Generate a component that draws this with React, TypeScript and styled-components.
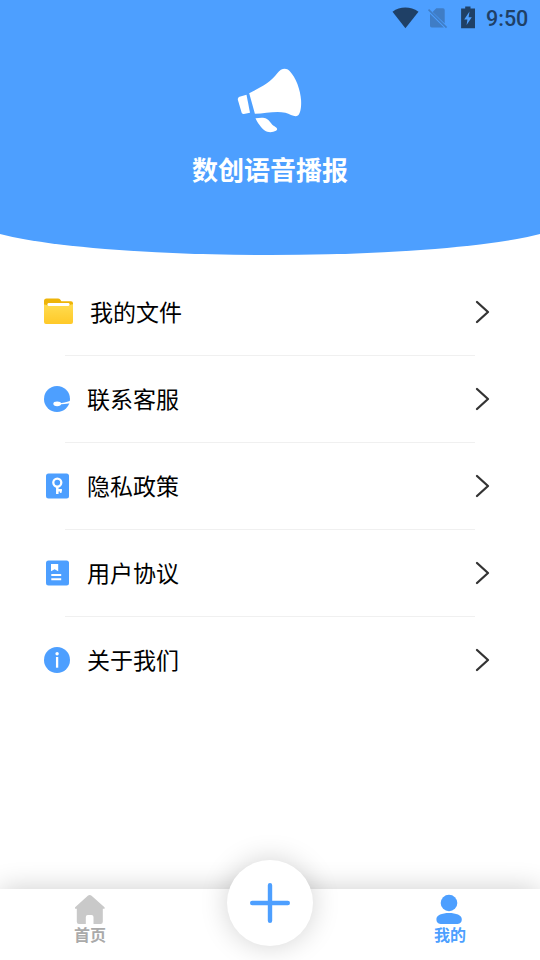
import React from 'react';
import styled, { createGlobalStyle } from 'styled-components';

const BLUE = '#4d9fff';
const STATUS = '#1f4066';

const GlobalStyle = createGlobalStyle`
  * { box-sizing: border-box; }
  body { margin: 0; background: #fff; font-family: "Noto Sans CJK SC", sans-serif; }
  svg { display: block; }
`;

const Screen = styled.div`
  width: 540px;
  height: 960px;
  display: flex;
  flex-direction: column;
  overflow: hidden;
  background: #fff;
`;

const Header = styled.header`
  width: 594px;
  height: 254.5px;
  margin-left: -27px;
  padding: 0 27px;
  flex: none;
  display: flex;
  flex-direction: column;
  align-items: center;
  background: ${BLUE};
  border-radius: 0 0 50% 50% / 0 0 36px 36px;
`;

const StatusBar = styled.div`
  width: 100%;
  height: 36px;
  padding-right: 12px;
  display: flex;
  justify-content: flex-end;
  align-items: center;
`;

const Clock = styled.span`
  width: 42px;
  margin-left: 8px;
  padding-top: 2px;
  font: 500 21.5px/34px Roboto, sans-serif;
  color: ${STATUS};
  white-space: nowrap;
`;

const Logo = styled.div`
  margin-top: 30px;
`;

const Title = styled.h1`
  margin: 15px 0 0;
  font-size: 26px;
  line-height: 40px;
  font-weight: 700;
  color: #fff;
`;

const Menu = styled.nav`
  flex: 1;
  padding-top: 14.5px;
`;

const Row = styled.div`
  height: 86px;
  padding: 0 49px 0 43px;
  display: flex;
  align-items: center;
`;

const RowLabel = styled.span`
  flex: 1;
  margin: 0 0 2px 16px;
  font-size: 23px;
  line-height: 34px;
  color: #000;
`;

const Divider = styled.div`
  height: 1px;
  margin: 0 65px;
  background: #f0f0f0;
`;

const TabBar = styled.footer`
  flex: none;
  height: 71px;
  display: grid;
  grid-template-columns: repeat(3, 1fr);
  background: #fff;
  box-shadow: 0 0 28px rgba(0, 0, 0, 0.2);
`;

const Tab = styled.div<{ $color: string }>`
  padding-top: 5px;
  display: flex;
  flex-direction: column;
  align-items: center;
  color: ${({ $color }) => $color};
`;

const TabLabel = styled.span`
  margin-top: -2px;
  font-size: 16px;
  line-height: 24px;
  font-weight: 700;
`;

const AddButton = styled.button`
  width: 86px;
  height: 86px;
  margin: -29px auto 0;
  padding: 0;
  border: 0;
  border-radius: 50%;
  background: #fff;
  display: flex;
  align-items: center;
  justify-content: center;
  box-shadow: 0 0 28px rgba(0, 0, 0, 0.18);
`;

const StatusIcons = () => (
  <svg width="86" height="34" viewBox="392 0 86 34" fill={STATUS}>
    <path d="M392.5 10.7C396.5 7.6 400.6 6.4 405.3 6.4s9 1.2 13.2 4.3L405.4 27.2z" />
    <g fill="#3f7dc6">
      <path d="M436.3 7.2H443a1.7 1.7 0 0 1 1.7 1.7v13.7L432.6 10.9z" />
      <path d="M430 12.7 443.9 26.4H431.7a1.7 1.7 0 0 1-1.7-1.7z" />
      <path d="m428 9.2 1.1-1.1 18 17.9-1.1 1.2z" />
    </g>
    <path d="M465.2 5.4h5.3v2h4.5v19.8h-13.9V7.4h4.1z" />
    <path d="m469.5 10.4-5.3 8h3.2l-.8 5.6 5.2-7.8h-3.2z" fill={BLUE} />
  </svg>
);

const Megaphone = () => (
  <svg width="66" height="68" viewBox="237 66 66 68" fill="#fff">
    <path d="M249.2 93.3C259 87.8 270 83.3 277.5 73c3.4-4.7 8.6-5.7 12.1-2.1 6.2 6.4 10.9 18.7 11.5 29.7.3 6.2-.6 12.2-2.9 14.7-3.2 2.4-7.3-.9-12.8-2.6-9.5-2.2-20 .8-30.5 1.1z" />
    <path d="m246.5 94.8 3.5 17.9-6.1 1.3c-1.1.1-1.9-.5-2.3-1.5l-3.7-12.6c-.3-1.4.3-2.8 1.6-3.2z" />
    <path d="M255.5 118.2c4.5-.5 8.5-.9 11 .5 3.3 1.8 4.2 5.2 8 7.6 2.7 1.7 3.6 3.3 1.5 4.5-3.7 2-8.4 1.8-11.3-.3-3.3-2.5-7.3-7.9-9.2-12.3z" />
  </svg>
);

const FolderIcon = () => (
  <svg width="31" height="30" viewBox="43 297 31 30">
    <defs>
      <linearGradient id="folder" x1="0" y1="0" x2="0" y2="1">
        <stop stopColor="#ffdc50" />
        <stop offset="1" stopColor="#ffc928" />
      </linearGradient>
    </defs>
    <path d="M44 301q0-2.5 2.5-2.5H58q1.5 0 2.2 1.1l1.2 1.7H71q2 0 2 2v10H44z" fill="#eeb408" />
    <rect x="47.5" y="303" width="22" height="6" rx="1.2" fill="#fff" />
    <path d="M44 304.5q2 0 3 .8.8.8 2 .8h19q1.3 0 2-1 .8-.8 3-.8V322q0 2-2 2H46q-2 0-2-2z" fill="url(#folder)" />
  </svg>
);

const ServiceIcon = () => (
  <svg width="28" height="28" viewBox="43 385 28 28">
    <circle cx="57" cy="399" r="13" fill={BLUE} />
    <ellipse cx="57.2" cy="403.8" rx="3.9" ry="2.4" fill="#fff" />
    <path d="M57 403.2c5 .4 8.6-1.2 13.5-2.5v2.5c-4 .3-8 1-12.2 1.2z" fill="#fff" />
  </svg>
);

const KeyIcon = () => (
  <svg width="28" height="28" viewBox="43 472 28 28" fill="none" stroke="#fff">
    <rect x="46" y="473.5" width="23" height="25" rx="2.5" fill={BLUE} stroke="none" />
    <circle cx="57.3" cy="482.6" r="4" strokeWidth="2.3" />
    <path d="M57.3 486.4v7.6M57.3 490.3h4.6" strokeWidth="2.5" />
    <path d="M60.7 490v2.9" strokeWidth="1.7" />
  </svg>
);

const DocumentIcon = () => (
  <svg width="28" height="28" viewBox="43 559 28 28">
    <rect x="46" y="560.5" width="23" height="25" rx="2.5" fill={BLUE} />
    <path d="M51 564h7.2v7.3l-3.6-2.1-3.6 2.1z" fill="#fff" />
    <path d="M51.3 575h9.9M51.3 579.2h9.9" stroke="#fff" strokeWidth="2" />
  </svg>
);

const InfoIcon = () => (
  <svg width="28" height="28" viewBox="43 646 28 28">
    <circle cx="57" cy="660" r="13" fill={BLUE} />
    <circle cx="57.1" cy="653.8" r="1.7" fill="#fff" />
    <path d="M57.1 657v10.7" stroke="#fff" strokeWidth="2.3" />
  </svg>
);

const Chevron = () => (
  <svg width="16" height="26" viewBox="475 299 16 26" fill="none" stroke="#333" strokeWidth="2.3">
    <path d="m477 302 11 10-11 10" strokeLinecap="round" strokeLinejoin="round" />
  </svg>
);

const HomeIcon = () => (
  <svg width="30" height="30" viewBox="75 894 30 30" fill="#c9c9c9">
    <path d="M87.8 895.7q1.9-1.5 3.8 0l12.6 11.2q1.5 1.6-.2 1.9h-1.2v13q0 2.2-2.2 2.2h-7.1v-7q0-2-2-2h-3.7q-2 0-2 2v7h-6.8q-2.2 0-2.2-2.2v-13h-1.2q-1.7-.3-.2-1.9z" />
  </svg>
);

const PersonIcon = () => (
  <svg width="32" height="30" viewBox="434 894 32 30" fill={BLUE}>
    <circle cx="449" cy="903" r="8.3" />
    <path d="M436.4 919.3c0-4.2 5.6-6.3 12.6-6.3s12.8 2.1 12.8 6.3c0 2.7-1.3 4.7-4.2 4.7h-17c-2.9 0-4.2-2-4.2-4.7z" />
  </svg>
);

const items = [
  { label: '我的文件', Icon: FolderIcon },
  { label: '联系客服', Icon: ServiceIcon },
  { label: '隐私政策', Icon: KeyIcon },
  { label: '用户协议', Icon: DocumentIcon },
  { label: '关于我们', Icon: InfoIcon },
];

export default function App() {
  return (
    <>
      <GlobalStyle />
      <Screen>
        <Header>
          <StatusBar>
            <StatusIcons />
            <Clock>9:50</Clock>
          </StatusBar>
          <Logo><Megaphone /></Logo>
          <Title>数创语音播报</Title>
        </Header>
        <Menu>
          {items.map(({ label, Icon }, i) => (
            <React.Fragment key={label}>
              {i > 0 && <Divider />}
              <Row>
                <Icon />
                <RowLabel>{label}</RowLabel>
                <Chevron />
              </Row>
            </React.Fragment>
          ))}
        </Menu>
        <TabBar>
          <Tab $color="#aaa">
            <HomeIcon />
            <TabLabel>首页</TabLabel>
          </Tab>
          <AddButton aria-label="添加">
            <svg width="42" height="42" viewBox="0 0 42 42" stroke={BLUE} strokeWidth="4.4" strokeLinecap="round">
              <path d="M3.2 21h35.6M21 3.2v35.6" />
            </svg>
          </AddButton>
          <Tab $color={BLUE}>
            <PersonIcon />
            <TabLabel>我的</TabLabel>
          </Tab>
        </TabBar>
      </Screen>
    </>
  );
}
